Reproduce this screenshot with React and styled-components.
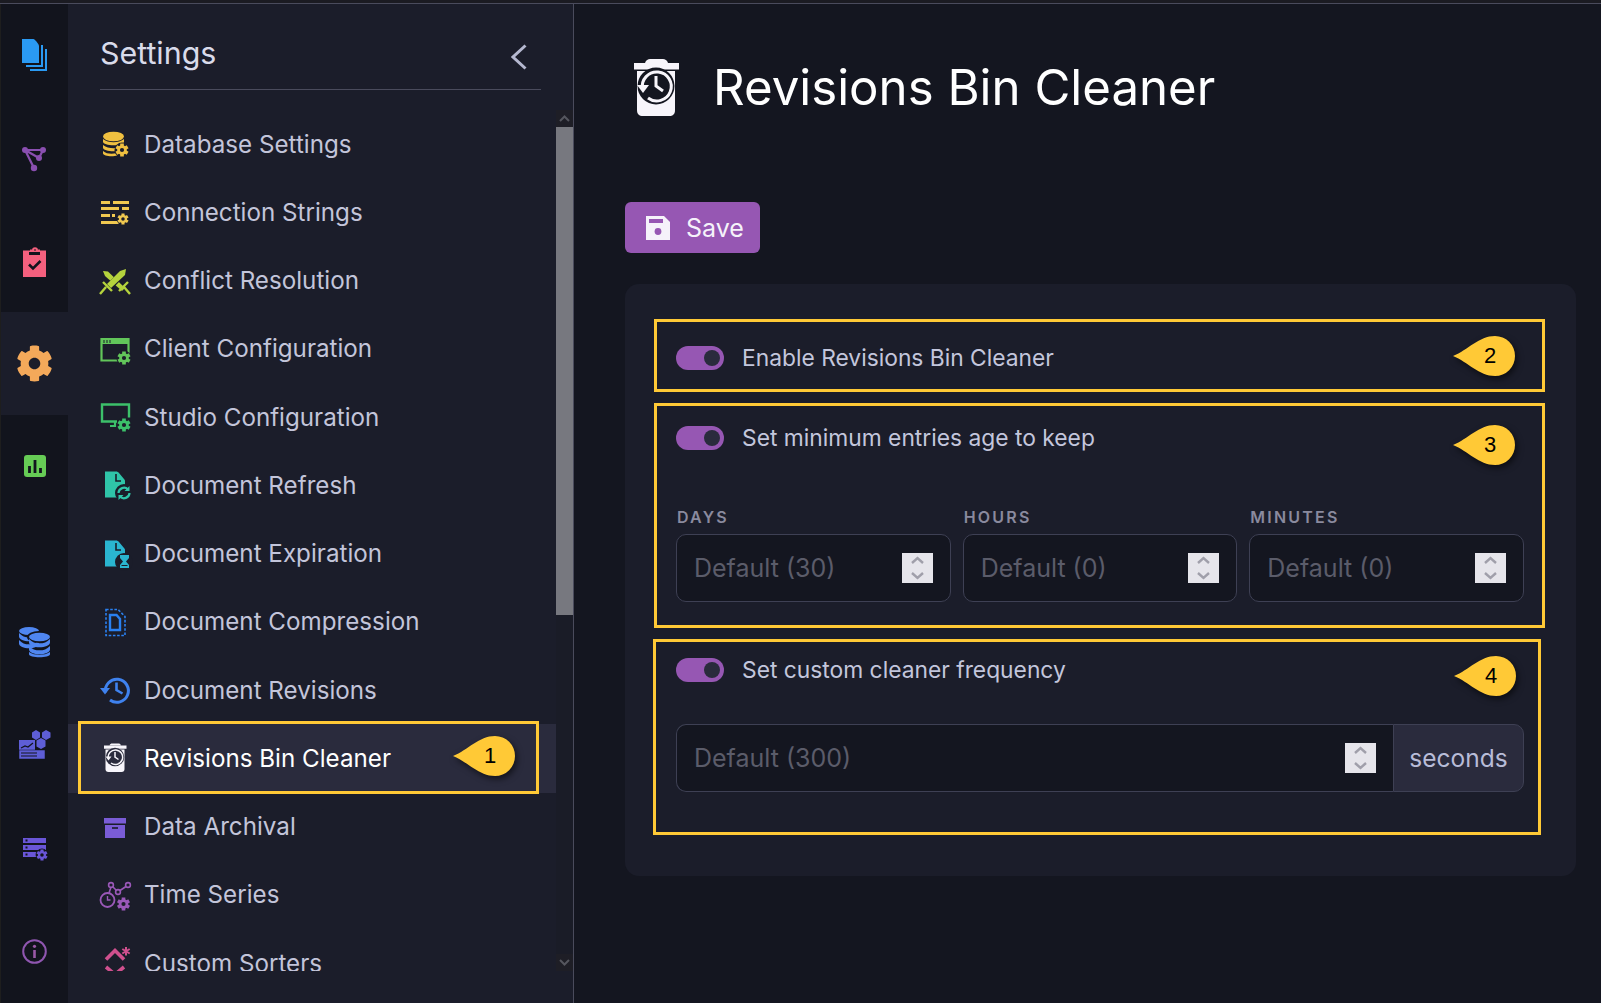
import React from "react";
import styled, { createGlobalStyle } from "styled-components";
import { FaCog } from "react-icons/fa";

const PANEL = "#1b1d2a";
const RAIL = "#12141d";
const MAIN = "#141620";
const FONT = `"Inter", "Noto Sans", sans-serif`;

const Global = createGlobalStyle`
  html, body { margin: 0; padding: 0; background: ${MAIN}; }
  * { box-sizing: border-box; }
  body { font-family: ${FONT}; }
`;

const Page = styled.div`
  width: 1601px; height: 1003px; display: flex; flex-direction: column; overflow: hidden; background: ${MAIN};
`;
const TopEdge = styled.div`
  height: 4px; flex: none; background: #1b1b22; border-bottom: 1px solid #4a4b5c;
`;
const Body = styled.div`display: flex; flex: 1; min-height: 0; border-left: 1px solid #1e1e1e;`;
const Rail = styled.nav`
  width: 67px; flex: none; background: ${RAIL}; display: flex; flex-direction: column; justify-content: space-between;
`;
const RailGroup = styled.div`display: flex; flex-direction: column;`;
const RailItem = styled.div`
  height: 102.75px; display: flex; align-items: center; justify-content: center;
  background: ${(p) => (p.$active ? PANEL : "transparent")};
`;
const RailGlyph = styled.svg`
  overflow: visible; flex: none; margin-top: ${(p) => p.$nudge || 0}px;
`;
const Panel = styled.aside`
  width: 506px; flex: none; background: ${PANEL}; border-right: 1px solid #4a4b5c;
  display: flex; flex-direction: column; padding-bottom: 32px;
`;
const PanelHead = styled.header`
  height: 86px; flex: none; margin: 0 32px; width: 441px; border-bottom: 1px solid #4a4b5c;
  display: flex; align-items: center; justify-content: space-between; padding: 13px 14px 1px 0;
`;
const PanelTitle = styled.h2`
  margin: 0; font-size: 30.4px; font-weight: 400; color: #d9dbea;
`;
const BackChevron = styled.svg`width: 16px; height: 26px; flex: none; margin-top: 8px;`;
const ListWrap = styled.div`flex: 1; min-height: 0; margin-top: 20px; display: flex;`;
const MenuList = styled.ul`
  list-style: none; margin: 0; padding: 0; width: 488px; overflow: hidden;
`;
const MenuItem = styled.li`
  position: relative; height: 68.25px; display: flex; align-items: center; gap: 12px; padding-left: 32px;
  background: ${(p) => (p.$active ? "#2a2b3d" : "transparent")};
`;
const ItemIcon = styled.svg`width: 32px; height: 40px; flex: none; overflow: visible;`;
const ItemLabel = styled.span`
  font-size: 24.2px; color: ${(p) => (p.$active ? "#ffffff" : "#c3c5da")}; white-space: nowrap;
`;
const ScrollBar = styled.div`
  width: 17px; flex: none; display: flex; flex-direction: column; background: #1a1c27;
`;
const ScrollArrow = styled.div`
  height: 17px; flex: none; background: #1e1e26; display: flex; align-items: center; justify-content: center;
`;
const ScrollThumb = styled.div`height: 488px; flex: none; background: #77787f;`;
const ScrollTrack = styled.div`flex: 1;`;
const HighlightFrame = styled.div`
  position: absolute; left: 10px; right: 17px; top: -3px; bottom: -1px; border: 3px solid #ffc936; pointer-events: none;
`;

const PinWrap = styled.div`
  position: absolute; top: ${(p) => p.$top}px; right: ${(p) => p.$right}px; width: 62px; height: 40px;
`;
const PinShape = styled.svg`
  position: absolute; inset: 0; width: 62px; height: 40px; overflow: visible;
  filter: drop-shadow(2px 3px 3px rgba(0, 0, 0, 0.55));
`;
const PinNumber = styled.span`
  position: absolute; left: 27px; width: 20px; top: 0; text-align: center;
  font: 22px/40px "Liberation Sans", sans-serif; color: #000;
`;

const Main = styled.main`flex: 1; min-width: 0; padding: 54px 25px 0 51px; display: flex; flex-direction: column; align-items: flex-start;`;
const TitleRow = styled.div`display: flex; align-items: center; gap: 34px; padding-left: 9px; height: 58px;`;
const Title = styled.h1`margin: 0; font-size: 49.2px; font-weight: 400; color: #fff; white-space: nowrap;`;
const SaveButton = styled.button`
  margin-top: 86px; width: 135px; height: 51px; border: 0; border-radius: 6px; background: #9657b3;
  display: flex; align-items: center; gap: 16px; padding: 0 0 0 21px; font-family: ${FONT}; font-size: 25px; color: #f5f2fa;
`;
const Card = styled.section`
  margin-top: 31px; width: 951px; height: 592px; background: ${PANEL}; border-radius: 14px; padding: 35px 31px 0 29px;
  display: flex; flex-direction: column; gap: 11px;
`;
const Block = styled.div`
  position: relative; border: 3px solid #ffc936;
  padding: ${(p) => p.$pad};
  margin-left: ${(p) => p.$shift || 0}px;
  margin-right: ${(p) => p.$trim || 0}px;
`;
const ToggleRow = styled.div`display: flex; align-items: center; gap: 18px; height: 24px;`;
const Toggle = styled.div`
  width: 48px; height: 24px; flex: none; border-radius: 12px; background: #9657b3;
  display: flex; align-items: center; justify-content: flex-end; padding-right: 4px;
`;
const Knob = styled.div`width: 16px; height: 16px; border-radius: 50%; background: #2a2b3d;`;
const ToggleLabel = styled.span`font-size: 22.8px; color: #c3c6dc; white-space: nowrap; padding-bottom: 1px;`;
const Fields = styled.div`
  margin-top: 57px; display: grid; grid-template-columns: repeat(3, 1fr); gap: 12px;
`;
const Field = styled.div`display: flex; flex-direction: column; gap: 7px;`;
const FieldLabel = styled.label`
  height: 20px; line-height: 20px; font-size: 16px; font-weight: 600; letter-spacing: 2.2px; color: #8a8a9e; padding-left: 1px;
`;
const Input = styled.div`
  height: 68px; display: flex; align-items: center; justify-content: space-between;
  background: ${MAIN}; border: 1px solid #3e4054; padding: 0 17px 0 17px;
  border-radius: ${(p) => p.$radius || "10px"}; ${(p) => p.$grow && "flex: 1; border-right: 0;"}
`;
const Placeholder = styled.span`font-size: 25px; color: #5b5c6a; white-space: nowrap;`;
const Spinner = styled.svg`width: 31px; height: 30px; flex: none; background: #e6e5eb; display: block;`;
const InputGroup = styled.div`margin-top: 42px; display: flex;`;
const Addon = styled.div`
  width: 131px; height: 68px; flex: none; display: flex; align-items: center; justify-content: center;
  background: #2a2b3d; border: 1px solid #3e4054; border-radius: 0 10px 10px 0;
  font-size: 24.5px; color: #b8bcd8;
`;

function Gear({ cx, cy, r, fill, bg = PANEL }) {
  const w = r * 0.7;
  return (
    <g>
      <circle cx={cx} cy={cy} r={r * 1.45} fill={bg} />
      {[0, 60, 120].map((a) => (
        <rect key={a} x={cx - w / 2} y={cy - r * 1.25} width={w} height={r * 2.5} fill={fill} transform={`rotate(${a} ${cx} ${cy})`} />
      ))}
      <circle cx={cx} cy={cy} r={r * 0.92} fill={fill} />
      <circle cx={cx} cy={cy} r={r * 0.4} fill={bg} />
    </g>
  );
}

function Layer({ x, y, w, h, c }) {
  const rx = w / 2;
  const ry = h * 0.42;
  return (
    <path
      d={`M${x} ${y}v${h * 0.45}c0 ${ry * 0.9} ${rx * 0.5} ${ry * 1.4} ${rx} ${ry * 1.4}s${rx} ${-ry * 0.5} ${rx} ${-ry * 1.4}v${-h * 0.45}c${-rx * 0.3} ${ry} ${-rx * 0.6} ${ry * 1.3} ${-rx} ${ry * 1.3}s${-rx * 0.7} ${-ry * 0.3} ${-rx} ${-ry * 1.3}z`}
      fill={c}
    />
  );
}

const Rv = ({ w, h, nudge, children }) => (
  <RailGlyph $nudge={nudge} width={w} height={h} viewBox={`0 0 ${w} ${h}`}>
    {children}
  </RailGlyph>
);

function BinArt({ x = 0, y = 0, s = 1, bg = MAIN }) {
  return (
    <g transform={`translate(${x} ${y}) scale(${s})`}>
      <path d="M11 4c1-3 3-4 5-4h13c2 0 4 1 5 4z" fill="#f7f5fb" />
      <rect x="0" y="4" width="45" height="6.5" fill="#f7f5fb" />
      <path d="M3 12h38v39c0 4-2 6-6 6H9c-4 0-6-2-6-6z" fill="#f7f5fb" />
      <circle cx="22" cy="27" r="18.5" fill={bg} />
      <path d="M8.5 30A14.5 14.5 0 1 1 14 39" fill="none" stroke="#f7f5fb" strokeWidth="3" />
      <path d="M3 26h12l-6 8z" fill="#f7f5fb" />
      <path d="M22 17v10l7 5" fill="none" stroke="#f7f5fb" strokeWidth="3" />
    </g>
  );
}

const railTop = [
  <Rv w={26} h={32} key="docs">
    <path d="M0 0h11.5c1 0 5.5 5 5.5 7v17H0z" fill="#2a9af3" />
    <path d="M20 6v21H4M24 10v21H8" fill="none" stroke="#2a9af3" strokeWidth="2" />
  </Rv>,
  <Rv w={25} h={26} nudge={2} key="graph">
    <path d="M3 4h18l-4 8M3 4l9 18M3 4l14 8" fill="none" stroke="#8a4fb0" strokeWidth="2.2" />
    <circle cx="3" cy="4" r="3" fill="#8a4fb0" />
    <circle cx="21" cy="4" r="3" fill="#8a4fb0" />
    <circle cx="12" cy="22" r="3.2" fill="#8a4fb0" />
    <circle cx="17" cy="12" r="3" fill="#8a4fb0" />
  </Rv>,
  <Rv w={23} h={29} nudge={4} key="clip">
    <rect x="0" y="2.5" width="23" height="26.5" fill="#f4607e" />
    <path d="M7 2.5h3c0-3 4-3 4 0h3" fill="none" stroke="#f4607e" strokeWidth="2" />
    <rect x="6" y="4" width="11" height="3" fill={RAIL} />
    <path d="M6 16.5l4 4 7.5-7.5" fill="none" stroke={RAIL} strokeWidth="2.6" />
  </Rv>,
  <FaCog key="gear" size={37} color="#f4a95a" />,
  <Rv w={22} h={22} key="chart">
    <rect width="22" height="22" rx="3" fill="#66cc55" />
    <path d="M5.5 18V11M11 18V5M16.5 18v-5" stroke={RAIL} strokeWidth="2.8" />
  </Rv>,
];

const railBottom = [
  <Rv w={31} h={32} key="db">
    <ellipse cx="10" cy="4" rx="10" ry="4" fill="#4f86f0" />
    <Layer x={0} y={6} w={20} h={8} c="#4f86f0" />
    <Layer x={0} y={13} w={20} h={8} c="#4f86f0" />
    <ellipse cx="20" cy="10" rx="12" ry="6" fill={RAIL} />
    <ellipse cx="20.5" cy="10" rx="10.5" ry="4.2" fill="#4f86f0" />
    <Layer x={10} y={12} w={21} h={8} c="#4f86f0" />
    <Layer x={10} y={19} w={21} h={8} c="#4f86f0" />
    <Layer x={10} y={25} w={21} h={5} c="#4f86f0" />
  </Rv>,
  <Rv w={32} h={29} nudge={-4} key="hex">
    <path d="M17 0l4 2.5v5l-4 2.5-4-2.5v-5zM27 0l4.5 2.5v5L27 10l-4-2.5v-5zM22 8l4.5 2.5v6L22 19l-4.5-2.5v-6z" fill="#5e5ed6" />
    <rect x="0" y="10" width="16" height="11" fill="#5e5ed6" />
    <path d="M2 18l4-2 3 1 5-4" fill="none" stroke={RAIL} strokeWidth="1.2" />
    <rect x="0" y="20" width="26" height="9" fill="#5e5ed6" stroke={RAIL} strokeWidth="0.5" />
    <path d="M2 23h16M2 26h16" stroke={RAIL} strokeWidth="1" />
  </Rv>,
  <Rv w={25} h={23} key="srv">
    <path d="M1 1h23v5H1zM1 8h23v5H1zM1 15h16v5H1z" fill="#6a56d8" />
    <path d="M3.5 2.5h2v2h-2zM3.5 9.5h2v2h-2zM3.5 16.5h2v2h-2z" fill={RAIL} />
    <Gear cx={20} cy={18} r={4.4} fill="#6a56d8" bg={RAIL} />
  </Rv>,
  <Rv w={25} h={25} key="info">
    <circle cx="12.5" cy="12.5" r="11.3" fill="none" stroke="#8f56b0" strokeWidth="2" />
    <circle cx="12.5" cy="7.3" r="1.6" fill="#9a58a6" />
    <path d="M12.5 11v8" stroke="#9a58a6" strokeWidth="2.6" />
  </Rv>,
];

const pageD = "M5 2.5h11c1.5 0 2 .5 3 1.5l5 6c1 1 1 1.5 1 3v15.5H5z";

const menu = [
  ["Database Settings", (
    <>
      <ellipse cx="13.5" cy="8.5" rx="10.5" ry="4.8" fill="#f0c040" />
      <Layer x={3} y={11} w={21} h={6} c="#f0c040" />
      <Layer x={3} y={17} w={21} h={6} c="#f0c040" />
      <Layer x={3} y={23} w={17} h={5} c="#f0c040" />
      <Gear cx={22} cy={22} r={5.2} fill="#f0c040" />
    </>
  )],
  ["Connection Strings", (
    <>
      <path d="M1 5h9v3H1zM13 5h16v3H13zM1 11h18v3H1zM22 11h7v3h-7zM1 18h9v3H1zM12 18h3v3h-3zM1 25h18v3H1z" fill="#f0c850" />
      <Gear cx={23} cy={23} r={4.4} fill="#f0c850" />
    </>
  )],
  ["Conflict Resolution", (
    <>
      <path d="M3 6l5 .5L25 23l-3 3L5 11z" fill="#b5d33d" />
      <path d="M27 3l-1 7-15 15-5-5L21 5z" fill={PANEL} />
      <path d="M26 4l-1 6-14 13-4-4L20 6z" fill="#b5d33d" />
      <path d="M3 17l9 9M0 29l6-7M19 26l9-9M30 29l-6-7" stroke="#b5d33d" strokeWidth="2.4" fill="none" />
    </>
  )],
  ["Client Configuration", (
    <>
      <path d="M24 27.5H1.5V6h27v15" fill="none" stroke="#62c65a" strokeWidth="2.2" />
      <rect x="1" y="5" width="28" height="6" fill="#62c65a" />
      <path d="M4 7v3M7 7v3M10 7v3" stroke={PANEL} strokeWidth="1" />
      <Gear cx={24} cy={25} r={5.2} fill="#62c65a" />
    </>
  )],
  ["Studio Configuration", (
    <>
      <path d="M17 20.5H2V3.5h27v13" fill="none" stroke="#3cc06a" strokeWidth="2.4" />
      <path d="M10 25h5v-5" fill="none" stroke="#3cc06a" strokeWidth="2.2" />
      <Gear cx={24} cy={24} r={5.2} fill="#3cc06a" />
    </>
  )],
  ["Document Refresh", (
    <>
      <path d={pageD} fill="#2fc4a8" />
      <path d="M16 5v7h5" fill="none" stroke={PANEL} strokeWidth="1.6" />
      <circle cx="24" cy="24" r="9" fill={PANEL} />
      <path d="M18.5 24a5.5 5.5 0 0 1 9.5-3.5M29.5 24a5.5 5.5 0 0 1-9.5 3.5" fill="none" stroke="#2fc4a8" strokeWidth="2.2" />
      <path d="M29.5 17v5h-5zM18.5 31v-5h5z" fill="#2fc4a8" />
    </>
  )],
  ["Document Expiration", (
    <>
      <path d={pageD} fill="#2ab5d0" />
      <path d="M16 5v7h5" fill="none" stroke={PANEL} strokeWidth="1.6" />
      <circle cx="24" cy="24" r="9" fill={PANEL} />
      <path d="M20 17h9v3l-3 3.5 3 3.5v3h-9v-3l3-3.5-3-3.5z" fill="#2ab5d0" />
      <path d="M21.5 27.5h6" stroke={PANEL} strokeWidth="1" />
    </>
  )],
  ["Document Compression", (
    <>
      <path d="M6 3.5h12l7 7v19H6z" fill="none" stroke="#2a80f0" strokeWidth="1.6" strokeDasharray="2.6 1.6" />
      <path d="M10 9h6.5l3.5 4v11H10z" fill="none" stroke="#2a80f0" strokeWidth="2.4" />
    </>
  )],
  ["Document Revisions", (
    <>
      <path d="M5.5 18.5A11.5 11.5 0 1 1 10 26" fill="none" stroke="#3f82ee" strokeWidth="3" />
      <path d="M0 14h10l-5 6.5z" fill="#3f82ee" />
      <path d="M16.5 8.5V16l6 3.5" fill="none" stroke="#3f82ee" strokeWidth="2.6" />
    </>
  )],
  ["Revisions Bin Cleaner", <BinArt x={4} y={1.5} s={0.5} bg="#2a2b3d" />],
  ["Data Archival", (
    <>
      <rect x="4" y="7" width="22" height="5.5" fill="#7a5cd6" />
      <rect x="5" y="14" width="20" height="13" fill="#7a5cd6" />
      <path d="M12 17h6" stroke={PANEL} strokeWidth="1.6" />
    </>
  )],
  ["Time Series", (
    <>
      <circle cx="7.5" cy="21" r="7" fill="none" stroke="#9a58b8" strokeWidth="1.8" />
      <path d="M7.5 17v4h3" fill="none" stroke="#9a58b8" strokeWidth="1.4" />
      <path d="M9 14l2-6M12.5 7.5l4 4M20 11.5l6-4" stroke="#9a58b8" strokeWidth="1.6" fill="none" />
      <circle cx="11" cy="6" r="2.4" fill="none" stroke="#9a58b8" strokeWidth="1.6" />
      <circle cx="18" cy="13" r="2.4" fill="none" stroke="#9a58b8" strokeWidth="1.6" />
      <circle cx="28" cy="6" r="2.4" fill="none" stroke="#9a58b8" strokeWidth="1.6" />
      <Gear cx={23.5} cy={25} r={5.2} fill="#9a58b8" />
    </>
  )],
  ["Custom Sorters", (
    <>
      <path d="M6 12.5l9-9 9 9M6 20l9 7.5 9-7.5" fill="none" stroke="#d0508e" strokeWidth="3.6" />
      <path d="M26 0v8.5M22.3 2l7.4 4.5M29.7 2l-7.4 4.5" stroke="#d0508e" strokeWidth="2" />
    </>
  )],
];

function Pin({ n, top, right }) {
  return (
    <PinWrap $top={top} $right={right}>
      <PinShape viewBox="0 0 62 40">
        <path d="M0 20C15 14 26 0 42 0a20 20 0 0 1 0 40C26 40 15 26 0 20z" fill="#ffc936" />
      </PinShape>
      <PinNumber>{n}</PinNumber>
    </PinWrap>
  );
}

const Spin = () => (
  <Spinner viewBox="0 0 31 30">
    <path d="M10 10l5.5-5 5.5 5M10 20l5.5 5 5.5-5" fill="none" stroke="#a09faa" strokeWidth="2.4" />
  </Spinner>
);

export default function App() {
  return (
    <Page>
      <Global />
      <TopEdge />
      <Body>
        <Rail>
          <RailGroup>
            {railTop.map((ic, i) => (
              <RailItem key={i} $active={i === 3}>{ic}</RailItem>
            ))}
          </RailGroup>
          <RailGroup>
            {railBottom.map((ic, i) => (
              <RailItem key={i}>{ic}</RailItem>
            ))}
          </RailGroup>
        </Rail>
        <Panel>
          <PanelHead>
            <PanelTitle>Settings</PanelTitle>
            <BackChevron viewBox="0 0 16 26">
              <path d="M14.5 1.5L2 13l12.5 11.5" fill="none" stroke="#b5b8d0" strokeWidth="3" />
            </BackChevron>
          </PanelHead>
          <ListWrap>
            <MenuList>
              {menu.map(([label, art], i) => {
                const active = label === "Revisions Bin Cleaner";
                return (
                  <MenuItem key={i} $active={active}>
                    <ItemIcon viewBox="0 -4 32 40">{art}</ItemIcon>
                    <ItemLabel $active={active}>{label}</ItemLabel>
                    {active && <HighlightFrame />}
                    {active && <Pin n={1} top={12} right={41} />}
                  </MenuItem>
                );
              })}
            </MenuList>
            <ScrollBar>
              <ScrollArrow>
                <svg width="11" height="7" viewBox="0 0 11 7"><path d="M1 6l4.5-4.5L10 6" fill="none" stroke="#55565e" strokeWidth="2" /></svg>
              </ScrollArrow>
              <ScrollThumb />
              <ScrollTrack />
              <ScrollArrow>
                <svg width="11" height="7" viewBox="0 0 11 7"><path d="M1 1l4.5 4.5L10 1" fill="none" stroke="#55565e" strokeWidth="2" /></svg>
              </ScrollArrow>
            </ScrollBar>
          </ListWrap>
        </Panel>
        <Main>
          <TitleRow>
            <svg width="45" height="57" viewBox="0 0 45 57"><BinArt /></svg>
            <Title>Revisions Bin Cleaner</Title>
          </TitleRow>
          <SaveButton>
            <svg width="24" height="24" viewBox="0 0 24 24">
              <path d="M0 0h18l6 6v18H0z" fill="#f5f2fa" />
              <rect x="3" y="3" width="14" height="4" fill="#9657b3" />
              <circle cx="12" cy="15.5" r="3.4" fill="#9657b3" />
            </svg>
            Save
          </SaveButton>
          <Card>
            <Block $pad="24px 18px 19px 19px">
              <ToggleRow>
                <Toggle><Knob /></Toggle>
                <ToggleLabel>Enable Revisions Bin Cleaner</ToggleLabel>
              </ToggleRow>
              <Pin n={2} top={14} right={27} />
            </Block>
            <Block $pad="20px 18px 23px 19px">
              <ToggleRow>
                <Toggle><Knob /></Toggle>
                <ToggleLabel>Set minimum entries age to keep</ToggleLabel>
              </ToggleRow>
              <Fields>
                {[["DAYS", "Default (30)"], ["HOURS", "Default (0)"], ["MINUTES", "Default (0)"]].map(([l, p]) => (
                  <Field key={l}>
                    <FieldLabel>{l}</FieldLabel>
                    <Input>
                      <Placeholder>{p}</Placeholder>
                      <Spin />
                    </Input>
                  </Field>
                ))}
              </Fields>
              <Pin n={3} top={19} right={27} />
            </Block>
            <Block $pad="16px 14px 40px 20px" $shift={-1} $trim={4}>
              <ToggleRow>
                <Toggle><Knob /></Toggle>
                <ToggleLabel>Set custom cleaner frequency</ToggleLabel>
              </ToggleRow>
              <InputGroup>
                <Input $grow $radius="10px 0 0 10px">
                  <Placeholder>Default (300)</Placeholder>
                  <Spin />
                </Input>
                <Addon>seconds</Addon>
              </InputGroup>
              <Pin n={4} top={14} right={22} />
            </Block>
          </Card>
        </Main>
      </Body>
    </Page>
  );
}
